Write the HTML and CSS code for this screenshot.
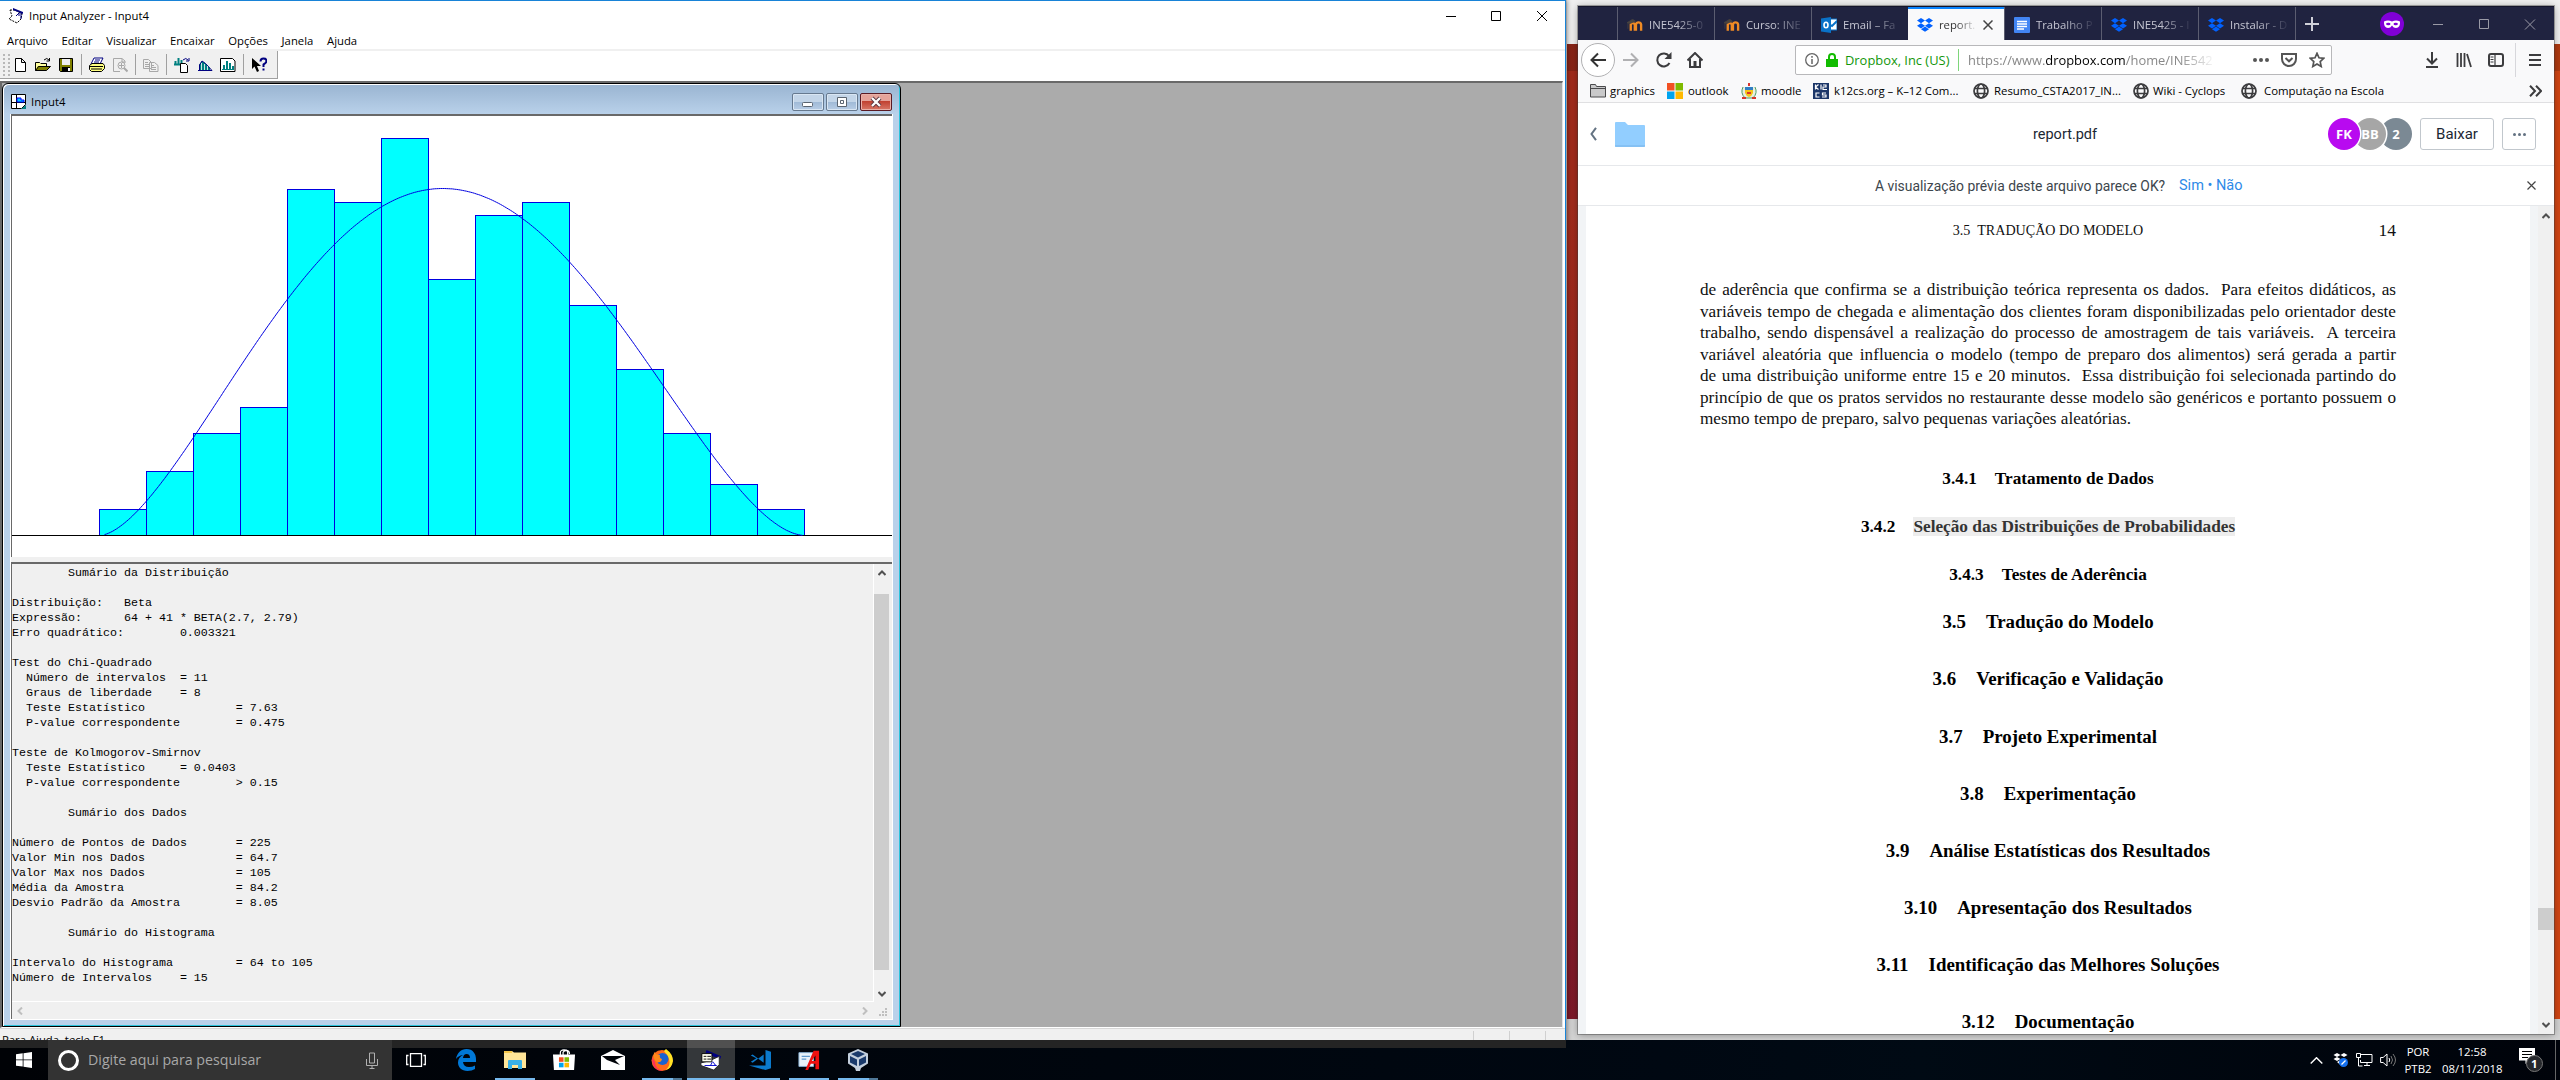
FILE: index.html
```html
<!DOCTYPE html>
<html lang="pt-BR">
<head>
<meta charset="utf-8">
<title>Input Analyzer - Input4</title>
<link rel="stylesheet" href="styles.css">
</head>
<body>
<svg width="0" height="0" class="defs" aria-hidden="true">
  <symbol id="dropbox" viewBox="0 0 16 14"><path d="M4 0 8 2.6 4 5.2 0 2.6zM12 0 16 2.6 12 5.2 8 2.6zM0 7.8 4 5.2 8 7.8 4 10.4zM12 5.2 16 7.8 12 10.4 8 7.8zM4 11.2 8 8.6 12 11.2 8 13.8z"/></symbol>
  <symbol id="globe" viewBox="0 0 16 16"><g fill="none" stroke="#3c3c3e" stroke-width="1.7"><circle cx="8" cy="8" r="7"/><ellipse cx="8" cy="8" rx="3.6" ry="7"/><path d="M1.5 5.5h13M1.5 10.5h13" stroke-width="1.5"/></g></symbol>
  <symbol id="moodle" viewBox="0 0 17 12"><path d="M4 12V5.5a2.3 2.3 0 0 1 4.300 0V12M9.500 12V5.500a2.800 2.800 0 0 1 5.500 0V12" fill="none" stroke="#f08b24" stroke-width="2.500"/><path d="M0 3.500 6 0 9 2 3 4.500zM1 4v6" fill="#4a4440" stroke="#4a4440" stroke-width=".8"/></symbol>
</svg>

<div class="desktop">
  <div class="back-window"></div>

  <section class="analyzer">
    <header class="an-title">
      <svg class="an-logo" viewBox="0 0 16 16"><path d="M2 2h5l7 4-1 5-4 4-8-4 3-3z" fill="#fff" stroke="#000" stroke-dasharray="2 1"/><path d="M5 0l10 4v2L5 2z" fill="#000080"/><path d="M8 8l3-3M11 5v3M13 5v6" fill="none" stroke="#000080"/></svg>
      <span class="grow">Input Analyzer - Input4</span>
      <svg class="an-ctl" viewBox="0 0 102 12"><path d="M0 6.500h10M45.500 1.500h9v9h-9zM91 1l10 10M101 1L91 11" fill="none" stroke="#000"/></svg>
    </header>
    <nav class="an-menu"><span>Arquivo</span><span>Editar</span><span>Visualizar</span><span>Encaixar</span><span>Opções</span><span>Janela</span><span>Ajuda</span></nav>
    <div class="an-tools">
      <div class="band">
        <i class="grip"></i>
        <svg viewBox="0 0 16 16"><path d="M3.500 1.500h6l4 4v9h-10zM9.500 1.500v4h4" fill="#fff" stroke="#000"/></svg>
        <svg viewBox="0 0 16 16"><path d="M.5 13.500v-8h4l1 1h6v3M.5 13.500l3-4h12l-4 4z" fill="#808000" stroke="#000"/><path d="M1 6h4l1 1h5v2H3l-2 3z" fill="#ffffa0"/><path d="M9 3q3-3 5 0M14.500 1v3h-3" fill="none" stroke="#000"/></svg>
        <svg viewBox="0 0 16 16"><path d="M1.500 1.500h13v13h-12l-1-1z" fill="#808000" stroke="#000"/><path d="M4 2h8v6H4z" fill="#eee"/><path d="M4 10h8v5H4z" fill="#000"/><path d="M10 11h2v3h-2z" fill="#fff"/></svg>
        <b></b>
        <svg viewBox="0 0 16 16"><path d="M5 1h9l-3 6H2z" fill="#fff" stroke="#000080"/><path d="M6 3h5M5 5h5" stroke="#000080"/><path d="M.5 8.500 3 6.500h11l1.500 2v3l-3 3H2.500l-2-2z" fill="#ffff80" stroke="#000"/><path d="M1 9.500h13M2 12h11" stroke="#000"/></svg>
        <svg viewBox="0 0 16 16"><path d="M13 6V4L10 1.500H1.500v13H8M10 2v3h3" fill="none" stroke="#a8a8a8"/><circle cx="9.500" cy="8.500" r="3.500" fill="none" stroke="#a8a8a8"/><path d="M12 11l3.500 3.500" stroke="#a8a8a8" stroke-width="2"/><path d="M9.500 6v5M7 8.500h5" stroke="#a8a8a8"/></svg>
        <b></b>
        <svg viewBox="0 0 16 16"><path d="M.5 2.500h5l3 3v6h-8zM6.500 5.500h5l3.500 3v6H6.500z" fill="#f0f0f0" stroke="#a8a8a8"/><path d="M2 5.500h3M2 7.500h4M2 9.500h4M8 8.500h3M8 10.500h5M8 12.500h5" stroke="#a8a8a8"/></svg>
        <b></b>
        <svg viewBox="0 0 16 16"><path d="M0 7.500h7M1.500 4v3M4.500 1v6M7.500 3v3" stroke="#008080" stroke-width="2"/><path d="M6.500 6.500h5l2 2v7h-7z" fill="#fff" stroke="#000"/><path d="M9 3q3-3 5 0M15 1v3h-3" fill="none" stroke="#000080"/></svg>
        <svg viewBox="0 0 16 16"><path d="M2 13V8l3-4 3 2 5 5v2z" fill="#008080"/><path d="M1 13.500h14L8.500 6.500 5 4 2.500 8v5" fill="none" stroke="#000080"/><path d="M4.500 6v7M7.500 7v6M10.500 9v4" stroke="#fff" stroke-width=".8"/></svg>
        <svg viewBox="0 0 16 16"><path d="M.5 1.500h12l2.500 2.500v10.500H.5z" fill="#fff" stroke="#000"/><path d="M2 12.500h12" stroke="#008080"/><path d="M4 12V8M7 12V4M10 12V6M13 12V9" stroke="#008080" stroke-width="2"/></svg>
        <b></b>
        <svg viewBox="0 0 16 16"><path d="M1 1v11l2.500-2.500L6 15l2-1-2-5h4z" fill="#000"/><path d="M9.500 4.500q0-3 3-3t3 2.500q0 2-3 3.500v2.500M12.500 11.500v2" fill="none" stroke="#000080" stroke-width="2"/></svg>
      </div>
    </div>
    <div class="mdi">
      <article class="child">
        <header class="child-title">
          <svg viewBox="0 0 16 16"><path d="M.5.500h14v10l-4 4H.5z" fill="#fff" stroke="#000"/><path d="M5.500 1v13M1 8.500h14" stroke="#000"/><path d="M6 8V4h4v2h3v2z" fill="#0cf" stroke="#00f"/><path d="M10 15h5v-4z" fill="#008080"/></svg>
          <span class="grow">Input4</span>
          <i class="cbtn"><svg viewBox="0 0 30 16"><rect x="9.500" y="8.500" width="10" height="4" rx="1" fill="#fff" stroke="#5a6470"/></svg></i>
          <i class="cbtn"><svg viewBox="0 0 30 16"><path d="M10.500 3.500h9v9h-9zM13.500 6.500h3v3h-3z" fill="#fff" stroke="#5a6470"/></svg></i>
          <i class="cbtn close"><svg viewBox="0 0 30 16"><path d="M11 4l8 8M19 4l-8 8" stroke="#5a3540" stroke-width="4"/><path d="M11 4l8 8M19 4l-8 8" stroke="#fff" stroke-width="2.300"/></svg></i>
        </header>
        <div class="client">
          <div class="chart"><svg id="plot" width="880" height="441" viewBox="12 116 880 441"></svg></div>
          <div class="report">
            <pre>        Sumário da Distribuição

Distribuição:   Beta
Expressão:      64 + 41 * BETA(2.7, 2.79)
Erro quadrático:        0.003321

Test do Chi-Quadrado
  Número de intervalos  = 11
  Graus de liberdade    = 8
  Teste Estatístico             = 7.63
  P-value correspondente        = 0.475

Teste de Kolmogorov-Smirnov
  Teste Estatístico     = 0.0403
  P-value correspondente        &gt; 0.15

        Sumário dos Dados

Número de Pontos de Dados       = 225
Valor Min nos Dados             = 64.7
Valor Max nos Dados             = 105
Média da Amostra                = 84.2
Desvio Padrão da Amostra        = 8.05

        Sumário do Histograma

Intervalo do Histograma         = 64 to 105
Número de Intervalos    = 15</pre>
            <div class="vbar">
              <svg viewBox="0 0 8 6"><path d="M.5 5 4 1.500 7.500 5" fill="none" stroke="#505050" stroke-width="2"/></svg>
              <i></i>
              <svg viewBox="0 0 8 6"><path d="M.5 1 4 4.500 7.500 1" fill="none" stroke="#505050" stroke-width="2"/></svg>
            </div>
            <div class="hbar">
              <svg viewBox="0 0 6 8"><path d="M5 .5 1.500 4 5 7.500" fill="none" stroke="#bfbfbf" stroke-width="2"/></svg>
              <svg viewBox="0 0 6 8"><path d="M1 .5 4.500 4 1 7.500" fill="none" stroke="#bfbfbf" stroke-width="2"/></svg>
            </div>
            <div class="sizer"><svg viewBox="0 0 9 9"><path d="M6 0h2v2H6zM3 3h2v2H3zM6 3h2v2H6zM0 6h2v2H0zM3 6h2v2H3zM6 6h2v2H6z" fill="#bfbfbf"/></svg></div>
          </div>
        </div>
      </article>
    </div>
    <footer class="status"><span class="grow">Para Ajuda, tecle F1</span><i></i><i></i><i></i></footer>
  </section>

  <section class="firefox">
    <div class="tabs">
      <div class="spacer"></div>
      <div class="tab"><svg class="ico moo"><use href="#moodle"/></svg><span>INE5425-0</span></div>
      <div class="tab"><svg class="ico moo"><use href="#moodle"/></svg><span>Curso: INE</span></div>
      <div class="tab"><svg class="ico" viewBox="0 0 16 16"><path d="M6 2h10v11H6z" fill="#fff" stroke="#0a72c8"/><path d="M8 7l3 2 5-5" stroke="#0a72c8" stroke-width="2" fill="none"/><path d="M0 1.500 10 0v16L0 14.500z" fill="#0a72c8"/><ellipse cx="5" cy="8" rx="2" ry="2.800" fill="none" stroke="#fff" stroke-width="1.600"/></svg><span>Email – Fa</span></div>
      <div class="tab active"><svg class="ico blue"><use href="#dropbox"/></svg><span>report.</span><svg class="x" viewBox="0 0 10 10"><path d="M.5.500l9 9M9.500.500l-9 9" stroke="#444" stroke-width="1.500"/></svg></div>
      <div class="tab"><svg class="ico" viewBox="0 0 16 16"><rect width="16" height="16" rx="1" fill="#4285f4"/><path d="M3 4.500h10M3 7h10M3 9.500h10M3 12h7" stroke="#fff" stroke-width="1.300"/></svg><span>Trabalho P</span></div>
      <div class="tab"><svg class="ico blue"><use href="#dropbox"/></svg><span>INE5425 - I</span></div>
      <div class="tab"><svg class="ico blue"><use href="#dropbox"/></svg><span>Instalar - D</span></div>
      <div class="tab-end">
        <svg class="plus" viewBox="0 0 14 14"><path d="M7 0v14M0 7h14" stroke="#cfd0d8" stroke-width="2"/></svg>
        <svg class="mask" viewBox="0 0 24 24"><circle cx="12" cy="12" r="12" fill="#8000d7"/><path d="M4 9.500q4-2 8 0 4-2 8 0 .5 6.500-4 6.500-2.500 0-4-2.500Q10.500 16 8 16q-4.500 0-4-6.500z" fill="#fff"/><ellipse cx="8.300" cy="12" rx="2.200" ry="1.300" fill="#8000d7"/><ellipse cx="15.700" cy="12" rx="2.200" ry="1.300" fill="#8000d7"/></svg>
        <svg class="wctl" viewBox="0 0 103 11"><path d="M0 5.500h10M46.500.500h9v9h-9zM92 .5l10 10M102 .5l-10 10" fill="none" stroke="#9a9aa6"/></svg>
      </div>
    </div>
    <div class="nav">
      <span class="back"><svg viewBox="0 0 16 16"><path d="M16 8H2M8 1.500 1.500 8 8 14.500" fill="none" stroke="#333" stroke-width="2"/></svg></span>
      <svg class="n fwd" viewBox="0 0 16 16"><path d="M0 8h14M8 1.500 14.500 8 8 14.500" fill="none" stroke="#b0b0b2" stroke-width="2"/></svg>
      <svg class="n rel" viewBox="0 0 16 16"><path d="M13.500 11A6.500 6.500 0 1 1 13 4" fill="none" stroke="#3c3c3e" stroke-width="2"/><path d="M15.500 0v7h-7z" fill="#3c3c3e"/></svg>
      <svg class="n home" viewBox="0 0 16 16"><path d="M.5 8.500 8 1l7.500 7.500M3 7v8h10V7" fill="none" stroke="#3c3c3e" stroke-width="2"/><path d="M6.500 9h3v6h-3z" fill="#3c3c3e"/></svg>
      <div class="url">
        <svg class="info" viewBox="0 0 14 14"><circle cx="7" cy="7" r="6.300" fill="none" stroke="#666" stroke-width="1.300"/><path d="M7 6v5M7 3v1.800" stroke="#666" stroke-width="1.500"/></svg>
        <svg class="lock" viewBox="0 0 12 14"><path d="M0 6h12v8H0z" fill="#12bc00"/><path d="M3 7V4a3 3 0 0 1 6 0v3" fill="none" stroke="#12bc00" stroke-width="2"/></svg>
        <span class="org">Dropbox, Inc (US)</span>
        <span class="addr">https://www.<em>dropbox.com</em>/home/INE542</span>
        <svg class="dots" viewBox="0 0 16 4"><circle cx="2" cy="2" r="2" fill="#555"/><circle cx="8" cy="2" r="2" fill="#555"/><circle cx="14" cy="2" r="2" fill="#555"/></svg>
        <svg class="pocket" viewBox="0 0 16 14"><path d="M1 1h14v5a7 7 0 0 1-14 0z" fill="none" stroke="#555" stroke-width="2"/><path d="M4.500 5 8 8.300 11.500 5" fill="none" stroke="#555" stroke-width="2"/></svg>
        <svg class="star" viewBox="0 0 16 16"><path d="M8 1.300l2 4.500 4.800.5-3.600 3.300 1 4.900L8 12l-4.200 2.500 1-4.900L1.200 6.300 6 5.800z" fill="none" stroke="#555" stroke-width="1.700"/></svg>
      </div>
      <div class="nav-right">
        <svg viewBox="0 0 16 16"><path d="M8 0v11M3 6.500l5 5 5-5M2 15h12" fill="none" stroke="#3c3c3e" stroke-width="2"/></svg>
        <svg viewBox="0 0 16 16"><path d="M1.500 1v14M5 1v14M8.500 1v14M11 2l4 13" stroke="#3c3c3e" stroke-width="1.800"/></svg>
        <svg viewBox="0 0 16 16"><rect x="1" y="2" width="14" height="12" rx="2" fill="none" stroke="#3c3c3e" stroke-width="2"/><path d="M7 2v12M2.500 5h3M2.500 7.500h3M2.500 10h3" stroke="#3c3c3e" stroke-width="1.200"/></svg>
        <b></b>
        <svg class="burger" viewBox="0 0 12 12"><path d="M0 1h12M0 6h12M0 11h12" stroke="#3c3c3e" stroke-width="2"/></svg>
      </div>
    </div>
    <div class="marks">
      <div class="w77"><svg viewBox="0 0 16 16"><path d="M.5 14V1.500h5l1 2h9V14zM.5 5.500h15" fill="#c9c9ca" stroke="#4a4a4c"/></svg><span>graphics</span></div>
      <div class="w74"><svg viewBox="0 0 16 16"><path d="M0 0h7.500v7.500H0z" fill="#f25022"/><path d="M8.500 0H16v7.500H8.500z" fill="#7fba00"/><path d="M0 8.500h7.500V16H0z" fill="#00a4ef"/><path d="M8.500 8.500H16V16H8.500z" fill="#ffb900"/></svg><span class="far">outlook</span></div>
      <div class="w72"><svg viewBox="0 0 16 16"><path d="M2 4q-3 6 2 11h8q5-5 2-11" fill="#e8efe0" stroke="#4c9a63"/><path d="M4 5h8v5q-1 3-4 4-3-1-4-4z" fill="#f5c518"/><path d="M4 4h8v3H4z" fill="#2f7fc4"/><path d="M7 0h2v3H7zM1 14h4v2H1zM11 14h4v2h-4zM6 9h4v2H6z" fill="#d9352c"/></svg><span>moodle</span></div>
      <div class="w160"><svg viewBox="0 0 16 16"><rect width="16" height="16" fill="#1c3668"/><path d="M2.500 1.500v5M5.500 1.500l-3 2.500 3 2.500M8 1.500v5M10 2h3v2h-3v2.500h4M6.500 10H3v4h3.500M13 10h-3.500v2H13v2H9" fill="none" stroke="#fff" stroke-width="1.200"/></svg><span class="far">k12cs.org – K–12 Com...</span></div>
      <div class="w160"><svg><use href="#globe"/></svg><span class="far">Resumo_CSTA2017_IN...</span></div>
      <div class="w108"><svg><use href="#globe"/></svg><span>Wiki - Cyclops</span></div>
      <div class="grow"><svg><use href="#globe"/></svg><span class="farther">Computação na Escola</span></div>
      <svg class="more" viewBox="0 0 13 12"><path d="M1 .8 6 6l-5 5.200M7 .8 12 6l-5 5.200" fill="none" stroke="#3c3c3e" stroke-width="2"/></svg>
    </div>
    <header class="db-head">
      <svg class="chev" viewBox="0 0 7 14"><path d="M6 .8 1.500 7 6 13.200" fill="none" stroke="#637282" stroke-width="2"/></svg>
      <svg class="folder" viewBox="0 0 30 25"><path d="M0 1q0-1 1-1h9l3 3h16q1 0 1 1v20q0 1-1 1H1q-1 0-1-1z" fill="#92ceff"/><path d="M0 24h30" stroke="#78b4e8"/></svg>
      <span class="name">report.pdf</span>
      <div class="people"><span class="fk">FK</span><span class="bb">BB</span><span class="two">2</span></div>
      <button class="dl">Baixar</button>
      <button class="dd"><i></i><i></i><i></i></button>
    </header>
    <div class="notice">
      <span class="q">A visualização prévia deste arquivo parece OK?</span><span class="a">Sim • Não</span>
      <svg viewBox="0 0 9 9"><path d="M.5.500l8 8M8.500.500l-8 8" stroke="#444" stroke-width="1.200"/></svg>
    </div>
    <div class="viewer">
      <div class="page">
        <div class="run"><span></span><span class="sec">3.5&nbsp; TRADUÇÃO DO MODELO</span><span class="no">14</span></div>
        <div class="para">
          <p>de aderência que confirma se a distribuição teórica representa os dados.&nbsp; Para efeitos didáticos, as</p>
          <p>variáveis tempo de chegada e alimentação dos clientes foram disponibilizadas pelo orientador deste</p>
          <p>trabalho, sendo dispensável a realização do processo de amostragem de tais variáveis.&nbsp; A terceira</p>
          <p>variável aleatória que influencia o modelo (tempo de preparo dos alimentos) será gerada a partir</p>
          <p>de uma distribuição uniforme entre 15 e 20 minutos.&nbsp; Essa distribuição foi selecionada partindo do</p>
          <p>princípio de que os pratos servidos no restaurante desse modelo são genéricos e portanto possuem o</p>
          <p>mesmo tempo de preparo, salvo pequenas variações aleatórias.</p>
        </div>
        <h4><b>3.4.1</b>Tratamento de Dados</h4>
        <h4><b>3.4.2</b><mark>Seleção das Distribuições de Probabilidades</mark></h4>
        <h4><b>3.4.3</b>Testes de Aderência</h4>
        <h3><b>3.5</b>Tradução do Modelo</h3>
        <h3><b>3.6</b>Verificação e Validação</h3>
        <h3><b>3.7</b>Projeto Experimental</h3>
        <h3><b>3.8</b>Experimentação</h3>
        <h3><b>3.9</b>Análise Estatísticas dos Resultados</h3>
        <h3><b>3.10</b>Apresentação dos Resultados</h3>
        <h3><b>3.11</b>Identificação das Melhores Soluções</h3>
        <h3 class="last"><b>3.12</b>Documentação</h3>
      </div>
      <div class="scroll">
        <svg viewBox="0 0 8 6"><path d="M.5 5 4 1.500 7.500 5" fill="none" stroke="#505050" stroke-width="2"/></svg>
        <i></i>
        <svg viewBox="0 0 8 6"><path d="M.5 1 4 4.500 7.500 1" fill="none" stroke="#505050" stroke-width="2"/></svg>
      </div>
    </div>
  </section>

  <footer class="taskbar">
    <div class="start"><svg viewBox="0 0 16 16"><path d="M0 2.300 6.700 1.300v6.200H0zM7.500 1.200 16 0v7.500H7.500zM0 8.300h6.700v6.300L0 13.700zM7.500 8.300H16V16l-8.500-1.200z" fill="#fff"/></svg></div>
    <div class="search"><i></i><span class="grow">Digite aqui para pesquisar</span><svg viewBox="0 0 12 17"><path d="M3.500 1h5v10h-5zM.5 7v6.500h11V7M6 13.500V16M3.500 16.500h5" fill="none" stroke="#b0b0b0"/></svg></div>
    <div class="view"><svg viewBox="0 0 20 14"><path d="M4.500.700h11v12.600h-11zM2.500 2.500H.7v9h1.800M17.500 2.500h1.800v9h-1.800" fill="none" stroke="#fff" stroke-width="1.300"/></svg></div>
    <div class="apps">
      <div><svg viewBox="0 0 20 22"><path d="M0 10C1 4 5 0 10.500 0 17 0 20 5 20 10v3H7q.5 5 6 5 3.500 0 6-1.500V20q-3 2-7.500 2C5.500 22 2 18 2 13.500 2 10 4 7.500 7 6 3.500 6.500 1.500 8 0 10zM7 9h7q0-4-3.500-4Q7.500 5 7 9z" fill="#0078d7"/></svg></div>
      <div class="open"><svg viewBox="0 0 22 20"><path d="M0 1h8l2 1.500h12V18H0z" fill="#ffe598"/><path d="M0 1h8v2H0z" fill="#f5c64a"/><path d="M4 19v-8q0-1 1-1h12q1 0 1 1v8h-4v-4H8v4z" fill="#38b0e8"/></svg></div>
      <div><svg viewBox="0 0 24 24"><path d="M8 7V4q0-3 4-3t4 3v3M11 7V3.500q1-2 4-2 3 .5 3 4" fill="none" stroke="#fff" stroke-width="1.300"/><path d="M0 6h24l-1 17H1z" fill="#fff"/><path d="M6.500 9h5v5h-5z" fill="#f25022"/><path d="M12.500 9h5v5h-5z" fill="#7fba00"/><path d="M6.500 15h5v5h-5z" fill="#00a4ef"/><path d="M12.500 15h5v5h-5z" fill="#ffb900"/></svg></div>
      <div><svg class="mail" viewBox="0 0 24 20"><path d="M0 6 12 0l12 6v14H0z" fill="#fff"/><path d="M1 6h22l-9 4 5 5L6 10z" fill="#000308"/></svg></div>
      <div class="open multi"><svg viewBox="0 0 22 22"><circle cx="11" cy="11.500" r="10.500" fill="#ff6a1a"/><path d="M1 8q0 14 11 14-8-2-8-9z" fill="#ff2f5a"/><path d="M13 2l2-2q7 5 7 12-1 7-7 9 5-5 3-11-1-4-5-8z" fill="#ffe226"/><circle cx="11.500" cy="10" r="6" fill="#1a62d0"/><path d="M3 3q2 3 6 3-1 3 2 4-1 4-5 3Q2 11 3 3z" fill="#ff8a1a"/></svg></div>
      <div class="active"><svg viewBox="0 0 24 24"><path d="M7 1l16 7-1 3L6 5z" fill="#000080"/><path d="M1 15l9-2 11-5v9l-6 6-14-5z" fill="#fff" stroke="#222"/><path d="M2 5h11v9H2z" fill="#ffe" stroke="#000"/><path d="M4 8h3M8 8h4M4 11h3M8 11h4" stroke="#000"/><path d="M11 18q1 0 2-3 1-2 2 0 1 3 3 3zM5 18h6" fill="none" stroke="#00c"/></svg></div>
      <div class="open"><svg viewBox="0 0 24 24"><path d="M18 1l6 2v18l-6 2-18-5h18z" fill="#0b7acc"/><path d="M2 7l2-1 12 9V6L4 15l-2-1 6-4z" fill="#0b7acc"/></svg></div>
      <div class="open"><svg viewBox="0 0 24 22"><path d="M1 3h16v15H1z" fill="#e9f2fa" stroke="#8ab4d8"/><path d="M4 7h9M4 10h5" stroke="#5d98cc" stroke-width="1.500"/><path d="M8 22 17 1h6v20h-4v-6h-5l-3 7zM15 12h4V6z" fill="#f01010" fill-rule="evenodd"/></svg></div>
      <div class="open multi"><svg viewBox="0 0 22 22"><path d="M11 0l10 4.500v10L14 19l-1 3H9l-1-3-7-4.500v-10z" fill="#c3cfdd"/><path d="M11 2l7 3-7 3.500L4 5zM3 7l7 3.500V17l-7-3.500zM19 7l-7 3.500V17l7-3.500z" fill="#1a3a6b"/></svg></div>
    </div>
    <div class="tray">
      <svg class="t1" viewBox="0 0 13 7"><path d="M.7 6.500 6.500.700 12.300 6.500" fill="none" stroke="#fff" stroke-width="1.400"/></svg>
      <svg class="t2" viewBox="0 0 16 16"><g fill="#fff"><path d="M4 1 7.500 3 4 5 .5 3zM11 1l3.500 2L11 5 7.500 3zM.5 7 4 5l3.500 2L4 9zM4 10l3.500-2v5z"/></g><circle cx="10.500" cy="10.500" r="4.500" fill="#1570ef"/><path d="M8.500 12.500l4-4" stroke="#fff" stroke-width="1.300"/></svg>
      <svg class="t3" viewBox="0 0 17 14"><path d="M5 1.500h11v8H4.500V7M8 12.500h6M11 10v2M.5.500h4v4h-4zM2.500 5v8h4" fill="none" stroke="#fff"/></svg>
      <svg class="t4" viewBox="0 0 16 14"><path d="M.6 4.500h2.500L7 1v12L3.100 9.500H.6z" fill="none" stroke="#fff"/><path d="M9 5q1.500 2 0 4" fill="none" stroke="#fff"/><path d="M11 3q3 4 0 8M13 1q5 6 0 12" fill="none" stroke="#777"/></svg>
      <div class="lang">POR<br>PTB2</div>
      <div class="clock">12:58<br>08/11/2018</div>
      <div class="note"><svg viewBox="0 0 24 25"><path d="M0 0h16v12.500H10L6.500 16v-3.500H0z" fill="#fff"/><path d="M3 3.500h10M3 6.500h10M3 9.500h6" stroke="#000"/><circle cx="15.500" cy="15.500" r="8" fill="#26282c" stroke="#777"/></svg><span>1</span></div>
      <b></b>
    </div>
  </footer>
</div>
<script src="script.js"></script>
</body>
</html>
```
FILE: styles.css
```css
* { box-sizing: border-box; }
body { margin: 0; overflow: hidden; font: 11.3px/16px "Open Sans", "Noto Sans", sans-serif; color: #000; }
svg { display: block; flex: none; }
.defs { position: absolute; }
.grow { flex: 1; }
.desktop { position: relative; width: 2560px; height: 1080px; background: #d4d4d4; overflow: hidden; }
.back-window { position: absolute; left: 1567px; right: 0; top: 0; height: 1019px; background: linear-gradient(#f0f0f0 0 44px, rgba(0,0,0,.16) 44px 71px, transparent 71px), linear-gradient(90deg, transparent 50%, #d24513 50%), linear-gradient(#a32c1c, #a32c1c 20%, #7e1a2a); }

/* Input Analyzer window */
.analyzer { position: absolute; left: 0; top: 0; width: 1566px; height: 1048px; background: #fff; border: 1px solid #1883d7; border-left: 0; display: flex; flex-direction: column; box-shadow: 1px 0 5px rgba(0,0,0,.45); }
.an-title { display: flex; align-items: center; height: 30px; padding: 0 17px 0 8px; gap: 5px; }
.an-logo { width: 16px; height: 16px; }
.an-ctl { width: 102px; height: 12px; }
.an-menu { display: flex; gap: 13.700px; height: 18px; align-items: center; padding: 2px 0 0 7px; }
.an-tools { border-top: 2px solid #f0f0f0; height: 32px; }
.band { display: flex; align-items: center; width: 278px; height: 28px; border-right: 1px solid #a0a0a0; border-bottom: 1px solid #a0a0a0; background: #f0f0f0; padding-left: 3px; }
.band svg { width: 16px; height: 16px; margin-right: 7px; }
.band b { width: 1px; height: 21px; background: #a0a0a0; margin: 0 7px 0 0; }
.grip { width: 7px; height: 25px; margin-right: 2px; background: repeating-linear-gradient(#f0f0f0 0 2px, transparent 2px 4px), repeating-linear-gradient(90deg, #b8b8b8 0 2px, #f0f0f0 2px 5px); }
.mdi { flex: 1; margin-right: 2px; border: solid; border-width: 2px 1px 1px 2px; border-color: #696969 #e3e3e3 #fff #696969; background: #ababab; }
.child { width: 899px; height: 944px; border: 1px solid #000; border-radius: 6px 6px 0 0; background: linear-gradient(#99b4d1, #b9d1ea 30px); padding: 1px 7px 6px 7px; box-shadow: inset 1px 1px #fff, inset -1px -1px #2cc4dc; display: flex; flex-direction: column; }
.child-title { display: flex; align-items: center; height: 29px; padding: 5px 1px 1px 1px; }
.child-title > svg { width: 16px; height: 16px; margin-right: 4px; }
.cbtn { width: 32px; height: 18px; margin-left: 2px; border: 1px solid #66798f; border-radius: 2px; background: linear-gradient(#c3d5e8 0 50%, #9fb9d6 50%, #b8cde6); box-shadow: inset 0 0 0 1px #d9e6f3; }
.cbtn.close { border-color: #5a1a24; background: linear-gradient(#e5a39a 0 45%, #c04030 45%, #d87868); box-shadow: inset 0 0 0 1px #e8b0a8; }
.cbtn svg { width: 30px; height: 16px; }
.client { flex: 1; display: flex; flex-direction: column; gap: 5px; background: #f0f0f0; border: 1px solid #fff; border-top: 0; min-height: 0; }
.chart { height: 443px; border: solid; border-width: 2px 0 0 1px; border-color: #696969; background: #fff; overflow: hidden; }
.report { flex: 1; border: solid; border-width: 2px 0 0 1px; border-color: #696969; display: grid; grid-template: 1fr 17px / 1fr 18px; min-height: 0; }
.report pre { margin: 0; padding: 2px 0 0 0; font: 11.667px/15px "Liberation Mono", monospace; border: solid #fff; border-width: 0 1px 1px 0; overflow: hidden; }
.vbar { display: flex; flex-direction: column; align-items: center; padding: 6px 3px 5px 0; }
.vbar svg { width: 8px; height: 6px; }
.vbar i { width: 15px; height: 376px; margin: 18px 0 auto; background: #cdcdcd; }
.hbar { display: flex; justify-content: space-between; align-items: center; padding: 0 6px 0 5px; }
.hbar svg { width: 6px; height: 8px; }
.sizer { padding: 6px 0 0 5px; }
.sizer svg { width: 9px; height: 9px; }
.status { display: flex; height: 19px; background: #f0f0f0; border-top: 1px solid #d7d7d7; padding: 2px 19px 0 2px; line-height: 17px; }
.status i { width: 36px; border-left: 1px solid #d0d0d0; }
.status i:last-child { width: 0; }

/* Browser window */
.firefox { position: absolute; left: 1578px; top: 6px; width: 976px; height: 1028px; background: #fff; box-shadow: 0 0 0 1px rgba(60,60,60,.4), 0 1px 8px rgba(0,0,0,.35); display: flex; flex-direction: column; }
.tabs { display: flex; height: 34px; background: #202340; border-top: 1px solid #14152b; color: #c5c6d2; }
.spacer { width: 39px; }
.tab { width: 97px; border-left: 1px solid #5b5d70; display: flex; align-items: center; padding: 2px 5px 0 9px; }
.tab span { margin-left: 6px; flex: 1; white-space: nowrap; -webkit-mask-image: linear-gradient(90deg, #000 45%, rgba(0,0,0,.1) 95%); mask-image: linear-gradient(90deg, #000 45%, rgba(0,0,0,.1) 95%); }
.ico { width: 16px; height: 16px; }
.ico.moo { height: 12px; }
.ico.blue { height: 14px; fill: #0061ff; }
.active.tab { background: #f9f9fa; color: #333; border-top: 2px solid #0a84ff; border-left: 0; padding-right: 11px; padding-top: 0; width: 96px; }
.x { width: 10px; height: 10px; margin-left: 6px; }
.tab-end { flex: 1; border-left: 1px solid #5b5d70; display: flex; align-items: center; padding: 1px 18px 0 9px; }
.plus { width: 14px; height: 14px; }
.mask { width: 24px; height: 24px; margin: 0 auto 0 61px; }
.wctl { width: 103px; height: 11px; }
.nav { display: flex; align-items: center; height: 40px; background: #f9f9fa; padding-left: 3px; }
.back { width: 34px; height: 34px; border: 1px solid #b1b1b3; border-radius: 50%; background: #fff; display: grid; place-items: center; }
.back svg, .n { width: 16px; height: 16px; }
.fwd { margin-left: 8px; } .rel { margin-left: 17px; } .home { margin-left: 15px; }
.url { width: 537px; height: 30px; margin-left: 92px; border: 1px solid #b8b8ba; border-radius: 2px; background: #fff; display: flex; align-items: center; padding-left: 9px; font-size: 12.900px; white-space: nowrap; }
.info { width: 14px; height: 14px; }
.lock { width: 12px; height: 14px; margin-left: 7px; }
.org { width: 114px; height: 22px; line-height: 22px; margin-left: 7px; color: #12960a; border-right: 1px solid #7ed67a; }
.addr { width: 248px; height: 22px; line-height: 22px; margin-left: 9px; color: #888; -webkit-mask-image: linear-gradient(90deg, #000 85%, transparent); mask-image: linear-gradient(90deg, #000 85%, transparent); }
.addr em { font-style: normal; color: #000; }
.dots { width: 16px; height: 4px; margin-left: 37px; }
.pocket { width: 16px; height: 14px; margin-left: 12px; }
.star { width: 16px; height: 16px; margin-left: 12px; }
.nav-right { display: flex; align-items: center; margin-left: 92px; gap: 16px; }
.nav-right svg { width: 16px; height: 16px; }
.nav-right b { width: 1px; height: 34px; background: #d7d7db; margin: 0 -3px 0 -5px; }
.nav-right .burger { width: 12px; height: 12px; }
.marks { display: flex; align-items: center; height: 23px; background: #f9f9fa; border-bottom: 1px solid #e0e0e2; padding: 0 12px 1px; font-size: 11.400px; white-space: nowrap; }
.marks div { display: flex; align-items: center; }
.marks div svg { width: 16px; height: 16px; }
.marks span { margin-left: 4px; } .marks .far { margin-left: 5px; } .marks .farther { margin-left: 7px; }
.w77 { width: 77px; } .w74 { width: 74px; } .w72 { width: 72px; } .w160 { width: 160px; } .w108 { width: 108px; }
.more { width: 13px; height: 12px; }
.db-head { display: flex; align-items: center; height: 63px; border-bottom: 1px solid #e6e8eb; padding: 0 18px 0 12px; font: 14.500px "Roboto", sans-serif; color: #1b2733; }
.chev { width: 7px; height: 14px; }
.folder { width: 30px; height: 25px; margin-left: 18px; }
.name { width: 66px; margin: 0 229px 0 388px; white-space: nowrap; }
.people { display: flex; width: 84px; }
.people span { width: 32px; height: 32px; margin-right: -6px; flex: none; border-radius: 50%; color: #fff; display: grid; place-items: center; font: bold 13px "Open Sans", sans-serif; position: relative; }
.fk { background: #b80af0; z-index: 2; box-shadow: 0 0 0 1.500px #fff; } .bb { background: #a6a6a6; z-index: 1; box-shadow: 0 0 0 1.500px #fff; } .two { background: #7b8994; }
button { height: 32px; border: 1px solid #c1c7cd; border-radius: 3px; background: #fff; padding: 0; font: 15px "Roboto", sans-serif; color: #1b2733; }
.dl { width: 74px; margin-left: 8px; } .dd { width: 34px; margin-left: 8px; display: flex; gap: 2px; align-items: center; justify-content: center; }
.dd i { width: 3px; height: 3px; border-radius: 50%; background: #637282; }
.notice { display: flex; align-items: center; height: 40px; border-bottom: 1px solid #e6e8eb; padding: 0 18px 0 297px; font: 13.900px "Roboto", sans-serif; color: #3d464d; white-space: nowrap; }
.q { width: 304px; } .a { color: #2d8ae8; font-size: 14.500px; }
.notice svg { width: 9px; height: 9px; margin-left: auto; }
.viewer { flex: 1; display: flex; min-height: 0; overflow: hidden; }
.page { flex: 1; border: solid #f2f4f6; border-width: 0 8px; padding: 12px 134px 0 114px; font-family: "Liberation Serif", serif; color: #111; overflow: hidden; }
.run { display: grid; grid-template-columns: 1fr auto 1fr; font-size: 14.100px; line-height: 24px; }
.no { text-align: right; font-size: 17.500px; }
.para { margin-top: 37px; font-size: 17.200px; line-height: 21.500px; }
.para p { margin: 0; white-space: nowrap; text-align-last: justify; }
.para p:last-child { text-align-last: left; }
h3, h4 { margin: 0; text-align: center; font-size: 18.900px; height: 57.100px; line-height: 24px; color: #000; white-space: nowrap; }
h4 { font-size: 17.250px; height: 47.800px; }
h3.last { height: 24px; }
.para + h4 { margin-top: 37.500px; }
h3 b { margin-right: 20px; }
h4 b { margin-right: 18px; }
mark { background: #ededed; color: #333; }
.scroll { width: 16px; background: #f0f0f0; display: flex; flex-direction: column; align-items: center; padding: 7px 0 6px; }
.scroll svg { width: 8px; height: 6px; }
.scroll i { width: 16px; height: 22px; margin: 689px 0 auto; background: #cdcdcd; }

/* Taskbar */
.taskbar { position: absolute; left: 0; right: 0; top: 1040px; height: 40px; display: flex; background: linear-gradient(#242424, #242424) 0 0 / 1566px 8px no-repeat, linear-gradient(90deg, #000206, #000812 65%, #000a14 75%, #00030a); }
.start { width: 48px; display: grid; place-items: center; }
.start svg { width: 16px; height: 16px; }
.search { width: 344px; background: #333; display: flex; align-items: center; padding: 0 14px 0 10px; font-size: 14.200px; color: #a8a8a8; }
.search i { width: 21px; height: 21px; border: 3px solid #fff; border-radius: 50%; margin-right: 9px; }
.search svg { width: 12px; height: 17px; }
.view { width: 50px; padding: 13px 0 0 14px; }
.view svg { width: 20px; height: 14px; }
.apps { display: flex; }
.apps div { width: 49px; height: 40px; padding: 0 5px 0 4px; display: flex; justify-content: center; align-items: center; }
.apps svg { width: 22px; height: 22px; }
.apps .mail { width: 24px; height: 20px; }
.open { background: linear-gradient(#76b9ed, #76b9ed) 4px 38px / 40px 2px no-repeat; }
.open.multi { background: linear-gradient(90deg, #76b9ed 31px, #4f7897 31px) 4px 38px / 40px 2px no-repeat; }
.apps .active { background: linear-gradient(#76b9ed, #76b9ed) 0 38px / 48px 2px no-repeat, linear-gradient(#505050 0 8px, #34373a 8px) 0 0 / 48px no-repeat; }
.tray { margin-left: auto; display: flex; align-items: center; color: #fff; font-size: 11.400px; line-height: 17px; text-align: center; }
.t1 { width: 13px; height: 7px; } .t2 { width: 16px; height: 16px; margin-left: 10px; } .t3 { width: 17px; height: 14px; margin-left: 7px; } .t4 { width: 16px; height: 14px; margin-left: 7px; }
.lang { width: 28px; margin: 0 0 0 8px; } .clock { width: 60px; margin: 0 0 0 10px; }
.note { width: 24px; height: 25px; margin: 0 12px 0 17px; position: relative; }
.note svg { width: 24px; height: 25px; }
.note span { position: absolute; left: 12px; top: 7px; font-weight: bold; }
.tray b { width: 5px; height: 40px; border-left: 1px solid #666; }
```
FILE: script.js
```js
// Histogram counts and the fitted curve 64 + 41 * BETA(2.7, 2.79)
const counts = [2, 5, 8, 10, 27, 26, 31, 20, 25, 26, 18, 13, 8, 4, 2];
const base = 535.5, unit = 12.8, left = 99.5, step = 47;
let out = '';
counts.forEach((n, i) => {
  const h = Math.round(n * unit);
  out += `<rect x="${left + i * step}" y="${base - h}" width="${step}" height="${h}" fill="#00ffff" stroke="#0000e0" shape-rendering="crispEdges"/>`;
});
const f = t => Math.pow(t, 1.7) * Math.pow(1 - t, 1.79);
const peak = f(1.7 / 3.49);
let d = '';
for (let x = 5; x <= 703; x += 2) {
  const y = base - f(x / 705) / peak * 347;
  d += (d ? 'L' : 'M') + (left + x) + ' ' + y.toFixed(1);
}
out += `<path d="M12 535.5H892" stroke="#000"/><path d="${d}" fill="none" stroke="#0000e0"/>`;
document.getElementById('plot').innerHTML = out;
```
